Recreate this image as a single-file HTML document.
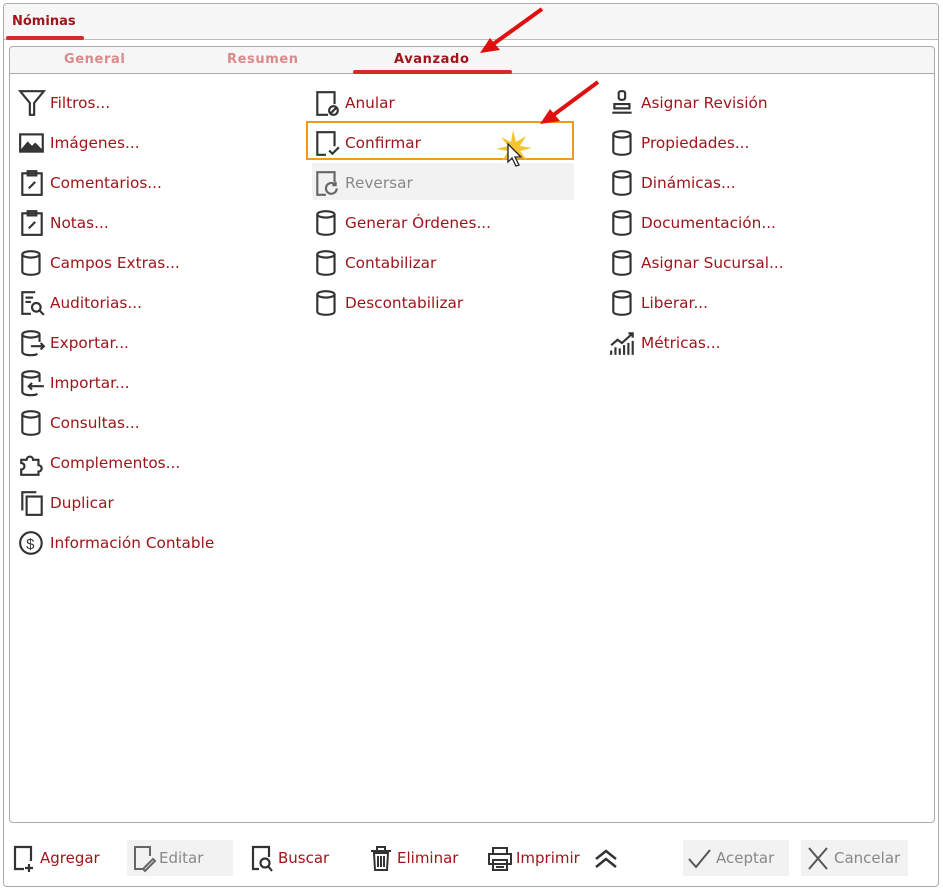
<!DOCTYPE html>
<html><head><meta charset="utf-8"><style>
*{box-sizing:border-box;margin:0;padding:0}
body{width:943px;height:890px;background:#fff;font-family:"DejaVu Sans","Liberation Sans",sans-serif;position:relative;overflow:hidden}
.frame{position:absolute;left:3px;top:3px;width:936px;height:884px;border:1px solid #aaa;border-radius:4px;background:#fff}
.hdr{position:absolute;left:4px;top:4px;width:934px;height:36px;background:#f7f7f7;border-bottom:1px solid #bbb;border-radius:4px 4px 0 0}
.hdr span{position:absolute;left:8px;top:10px;font-size:13px;font-weight:bold;color:#a0151a}
.hdr i{position:absolute;left:2px;top:32px;width:78px;height:4px;background:#d42a2a;border-radius:2px}
.panel{position:absolute;left:9px;top:46px;width:926px;height:777px;border:1px solid #aaa;border-radius:4px}
.tabs{position:absolute;left:0;top:0;width:100%;height:27px;background:#f6f6f6;border-bottom:1px solid #aaa;border-radius:4px 4px 0 0}
.tab{position:absolute;top:5px;font-size:13px;font-weight:bold;color:#d98a8a;letter-spacing:.6px}
.it{position:absolute;height:24px;font-size:15.3px;color:#a0151a;line-height:24px;white-space:nowrap}
.it svg{position:absolute;left:-32px;top:-2px;width:28px;height:28px}
.dis{color:#888}
.btn{position:absolute;top:840px;height:36px;font-size:15px;line-height:36px;color:#a0151a}
.btn svg{position:absolute;top:5px}
.g{background:#f2f2f2;color:#888}
</style></head><body>
<div class="frame"></div>
<div class="hdr"><span>Nóminas</span><i></i></div>
<div class="panel"><div class="tabs">
<span class="tab" style="left:54px">General</span>
<span class="tab" style="left:217px">Resumen</span>
<span class="tab" style="left:384px;color:#a0151a">Avanzado</span>
<i style="position:absolute;left:343px;top:23px;width:159px;height:4px;background:#d42a2a;border-radius:2px"></i>
</div></div>

<!-- col1 -->
<div class="it" style="left:50px;top:91px"><svg viewBox="0 0 26 26" fill="none" stroke="#333" stroke-width="2"><path d="M2 2h22L15 13v11h-4V13z"/></svg>Filtros...</div>
<div class="it" style="left:50px;top:131px"><svg viewBox="0 0 26 26" fill="none" stroke="#333" stroke-width="2"><rect x="2" y="5" width="21" height="16"/><path d="M4 19l5-6 4 4 3-3 5 5z" fill="#333"/></svg>Imágenes...</div>
<div class="it" style="left:50px;top:171px"><svg viewBox="0 0 26 26" fill="none" stroke="#333" stroke-width="2"><rect x="4" y="4" width="18" height="20"/><path d="M9 2h8v4H9zM10 18l6-6" /></svg>Comentarios...</div>
<div class="it" style="left:50px;top:211px"><svg viewBox="0 0 26 26" fill="none" stroke="#333" stroke-width="2"><rect x="4" y="4" width="18" height="20"/><path d="M9 2h8v4H9zM10 18l6-6" /></svg>Notas...</div>
<div class="it" style="left:50px;top:251px"><svg viewBox="0 0 26 26" fill="none" stroke="#333" stroke-width="2"><ellipse cx="12" cy="5" rx="8" ry="3"/><path d="M4 5v16c0 4 16 4 16 0V5"/></svg>Campos Extras...</div>
<div class="it" style="left:50px;top:291px"><svg viewBox="0 0 26 26" fill="none" stroke="#333" stroke-width="2"><path d="M16 3H4v20h8"/><circle cx="17" cy="17" r="4"/><path d="M20 20l4 4M7 8h7M7 12h5"/></svg>Auditorias...</div>
<div class="it" style="left:50px;top:331px"><svg viewBox="0 0 26 26" fill="none" stroke="#333" stroke-width="2"><ellipse cx="12" cy="5" rx="8" ry="3"/><path d="M4 5v16c0 4 12 4 14 2M20 5v7M12 16h12M21 13l3 3-3 3"/></svg>Exportar...</div>
<div class="it" style="left:50px;top:371px"><svg viewBox="0 0 26 26" fill="none" stroke="#333" stroke-width="2"><ellipse cx="12" cy="5" rx="8" ry="3"/><path d="M4 5v16c0 4 12 4 14 2M20 5v7M10 16h14M13 13l-3 3 3 3"/></svg>Importar...</div>
<div class="it" style="left:50px;top:411px"><svg viewBox="0 0 26 26" fill="none" stroke="#333" stroke-width="2"><ellipse cx="12" cy="5" rx="8" ry="3"/><path d="M4 5v16c0 4 16 4 16 0V5"/></svg>Consultas...</div>
<div class="it" style="left:50px;top:451px"><svg viewBox="0 0 26 26" fill="none" stroke="#333" stroke-width="2"><path d="M3 10h5a3 3 0 1 1 6 0h5v5a3 3 0 1 1 0 6v3H3v-5a3 3 0 1 0 0-6z"/></svg>Complementos...</div>
<div class="it" style="left:50px;top:491px"><svg viewBox="0 0 26 26" fill="none" stroke="#333" stroke-width="2"><rect x="8" y="7" width="14" height="17"/><path d="M4 20V3h13"/></svg>Duplicar</div>
<div class="it" style="left:50px;top:531px"><svg viewBox="0 0 26 26" fill="none" stroke="#333" stroke-width="2"><circle cx="12" cy="13" r="10"/><text x="7.5" y="18.5" font-size="14" fill="#333" stroke="none" font-family="Liberation Sans">$</text></svg>Información Contable</div>

<!-- col2 -->
<div style="position:absolute;left:312px;top:163px;width:262px;height:37px;background:#f2f2f2;border-radius:2px"></div>
<div style="position:absolute;left:306px;top:121px;width:268px;height:39px;border:2px solid #f39a1e"></div>
<div class="it" style="left:345px;top:91px"><svg viewBox="0 0 26 26" fill="none" stroke="#333" stroke-width="2"><path d="M14 24H4V3h16v11"/><circle cx="19" cy="20" r="4"/><path d="M16 23l6-6"/></svg>Anular</div>
<div class="it" style="left:345px;top:131px"><svg viewBox="0 0 26 26" fill="none" stroke="#333" stroke-width="2"><path d="M12 24H4V3h16v13M15 20l3 3 6-6"/></svg>Confirmar</div>
<div class="it dis" style="left:345px;top:171px"><svg viewBox="0 0 26 26" fill="none" stroke="#666" stroke-width="2"><path d="M12 24H4V3h16v9"/><path d="M22 18a5 5 0 1 1-2-4l1 1M21 12v3h-3"/></svg>Reversar</div>
<div class="it" style="left:345px;top:211px"><svg viewBox="0 0 26 26" fill="none" stroke="#333" stroke-width="2"><ellipse cx="12" cy="5" rx="8" ry="3"/><path d="M4 5v16c0 4 16 4 16 0V5"/></svg>Generar Órdenes...</div>
<div class="it" style="left:345px;top:251px"><svg viewBox="0 0 26 26" fill="none" stroke="#333" stroke-width="2"><ellipse cx="12" cy="5" rx="8" ry="3"/><path d="M4 5v16c0 4 16 4 16 0V5"/></svg>Contabilizar</div>
<div class="it" style="left:345px;top:291px"><svg viewBox="0 0 26 26" fill="none" stroke="#333" stroke-width="2"><ellipse cx="12" cy="5" rx="8" ry="3"/><path d="M4 5v16c0 4 16 4 16 0V5"/></svg>Descontabilizar</div>

<!-- col3 -->
<div class="it" style="left:641px;top:91px"><svg viewBox="0 0 26 26" fill="none" stroke="#333" stroke-width="2"><rect x="9" y="2" width="6" height="8" rx="2"/><path d="M5 14h14v4H5zM3 22h18"/></svg>Asignar Revisión</div>
<div class="it" style="left:641px;top:131px"><svg viewBox="0 0 26 26" fill="none" stroke="#333" stroke-width="2"><ellipse cx="12" cy="5" rx="8" ry="3"/><path d="M4 5v16c0 4 16 4 16 0V5"/></svg>Propiedades...</div>
<div class="it" style="left:641px;top:171px"><svg viewBox="0 0 26 26" fill="none" stroke="#333" stroke-width="2"><ellipse cx="12" cy="5" rx="8" ry="3"/><path d="M4 5v16c0 4 16 4 16 0V5"/></svg>Dinámicas...</div>
<div class="it" style="left:641px;top:211px"><svg viewBox="0 0 26 26" fill="none" stroke="#333" stroke-width="2"><ellipse cx="12" cy="5" rx="8" ry="3"/><path d="M4 5v16c0 4 16 4 16 0V5"/></svg>Documentación...</div>
<div class="it" style="left:641px;top:251px"><svg viewBox="0 0 26 26" fill="none" stroke="#333" stroke-width="2"><ellipse cx="12" cy="5" rx="8" ry="3"/><path d="M4 5v16c0 4 16 4 16 0V5"/></svg>Asignar Sucursal...</div>
<div class="it" style="left:641px;top:291px"><svg viewBox="0 0 26 26" fill="none" stroke="#333" stroke-width="2"><ellipse cx="12" cy="5" rx="8" ry="3"/><path d="M4 5v16c0 4 16 4 16 0V5"/></svg>Liberar...</div>
<div class="it" style="left:641px;top:331px"><svg viewBox="0 0 26 26" fill="none" stroke="#333" stroke-width="2"><path d="M2 24v-4M6 24v-7M10 24v-6M14 24v-9M18 24v-11M22 24v-13M2 15l6-5 4 3 10-9M18 4h4v4"/></svg>Métricas...</div>

<!-- arrows / cursor -->
<svg style="position:absolute;left:470px;top:5px" width="80" height="50"><path d="M72 4L22 40" stroke="#e01010" stroke-width="4"/><path d="M10 48l20-3-10-12z" fill="#e01010"/></svg>
<svg style="position:absolute;left:530px;top:78px" width="75" height="52"><path d="M68 4L22 38" stroke="#e01010" stroke-width="4"/><path d="M10 46l20-3-10-12z" fill="#e01010"/></svg>
<svg style="position:absolute;left:494px;top:128px" width="40" height="44"><path d="M19 2l3 12 10-6-6 10 12 2-12 3 7 9-10-5-2 12-3-12-10 6 6-10-12-2 12-3-7-9 10 5z" fill="#f4c430"/><path d="M14 16v18l4-4 4 8 3-1-4-8h6z" fill="#fff" stroke="#222" stroke-width="1.3"/></svg>

<!-- bottom -->
<div class="btn" style="left:10px;width:95px"><svg style="left:2px" width="26" height="28" fill="none" stroke="#333" stroke-width="2.2"><path d="M12 24H3V2h16v14M17 19v8M13 23h8"/></svg><span style="position:absolute;left:30px">Agregar</span></div>
<div class="btn g" style="left:127px;width:106px"><svg style="left:4px" width="26" height="28" fill="none" stroke="#666" stroke-width="2"><path d="M12 24H4V2h15v9M12 24l10-10 2 2-10 10z"/></svg><span style="position:absolute;left:32px">Editar</span></div>
<div class="btn" style="left:248px;width:90px"><svg style="left:2px" width="26" height="28" fill="none" stroke="#333" stroke-width="2.2"><path d="M9 24H3V2h16v10"/><circle cx="15" cy="18" r="4.5"/><path d="M18 21l4 5"/></svg><span style="position:absolute;left:30px">Buscar</span></div>
<div class="btn" style="left:367px;width:95px"><svg style="left:2px" width="26" height="28" fill="none" stroke="#333" stroke-width="2"><path d="M2 6h20M8 6V2h8v4M5 8h14l-1 17H6zM9 11v11M12 11v11M15 11v11"/></svg><span style="position:absolute;left:30px">Eliminar</span></div>
<div class="btn" style="left:485px;width:100px"><svg style="left:2px" width="26" height="28" fill="none" stroke="#333" stroke-width="2"><path d="M6 9V3h14v6M2 9h22v10H2zM6 15h14v10H6zM9 19h8M9 22h8"/></svg><span style="position:absolute;left:31px">Imprimir</span></div>
<svg style="position:absolute;left:593px;top:848px" width="26" height="22" fill="none" stroke="#333" stroke-width="2.5"><path d="M3 11l10-8 10 8M3 19l10-8 10 8"/></svg>
<div class="btn g" style="left:683px;width:106px"><svg style="left:3px" width="26" height="28" fill="none" stroke="#555" stroke-width="2"><path d="M3 14l7 8 14-17"/></svg><span style="position:absolute;left:33px">Aceptar</span></div>
<div class="btn g" style="left:801px;width:107px"><svg style="left:5px" width="24" height="28" fill="none" stroke="#555" stroke-width="2"><path d="M3 3l18 21M21 3L3 24"/></svg><span style="position:absolute;left:33px">Cancelar</span></div>
</body></html>
